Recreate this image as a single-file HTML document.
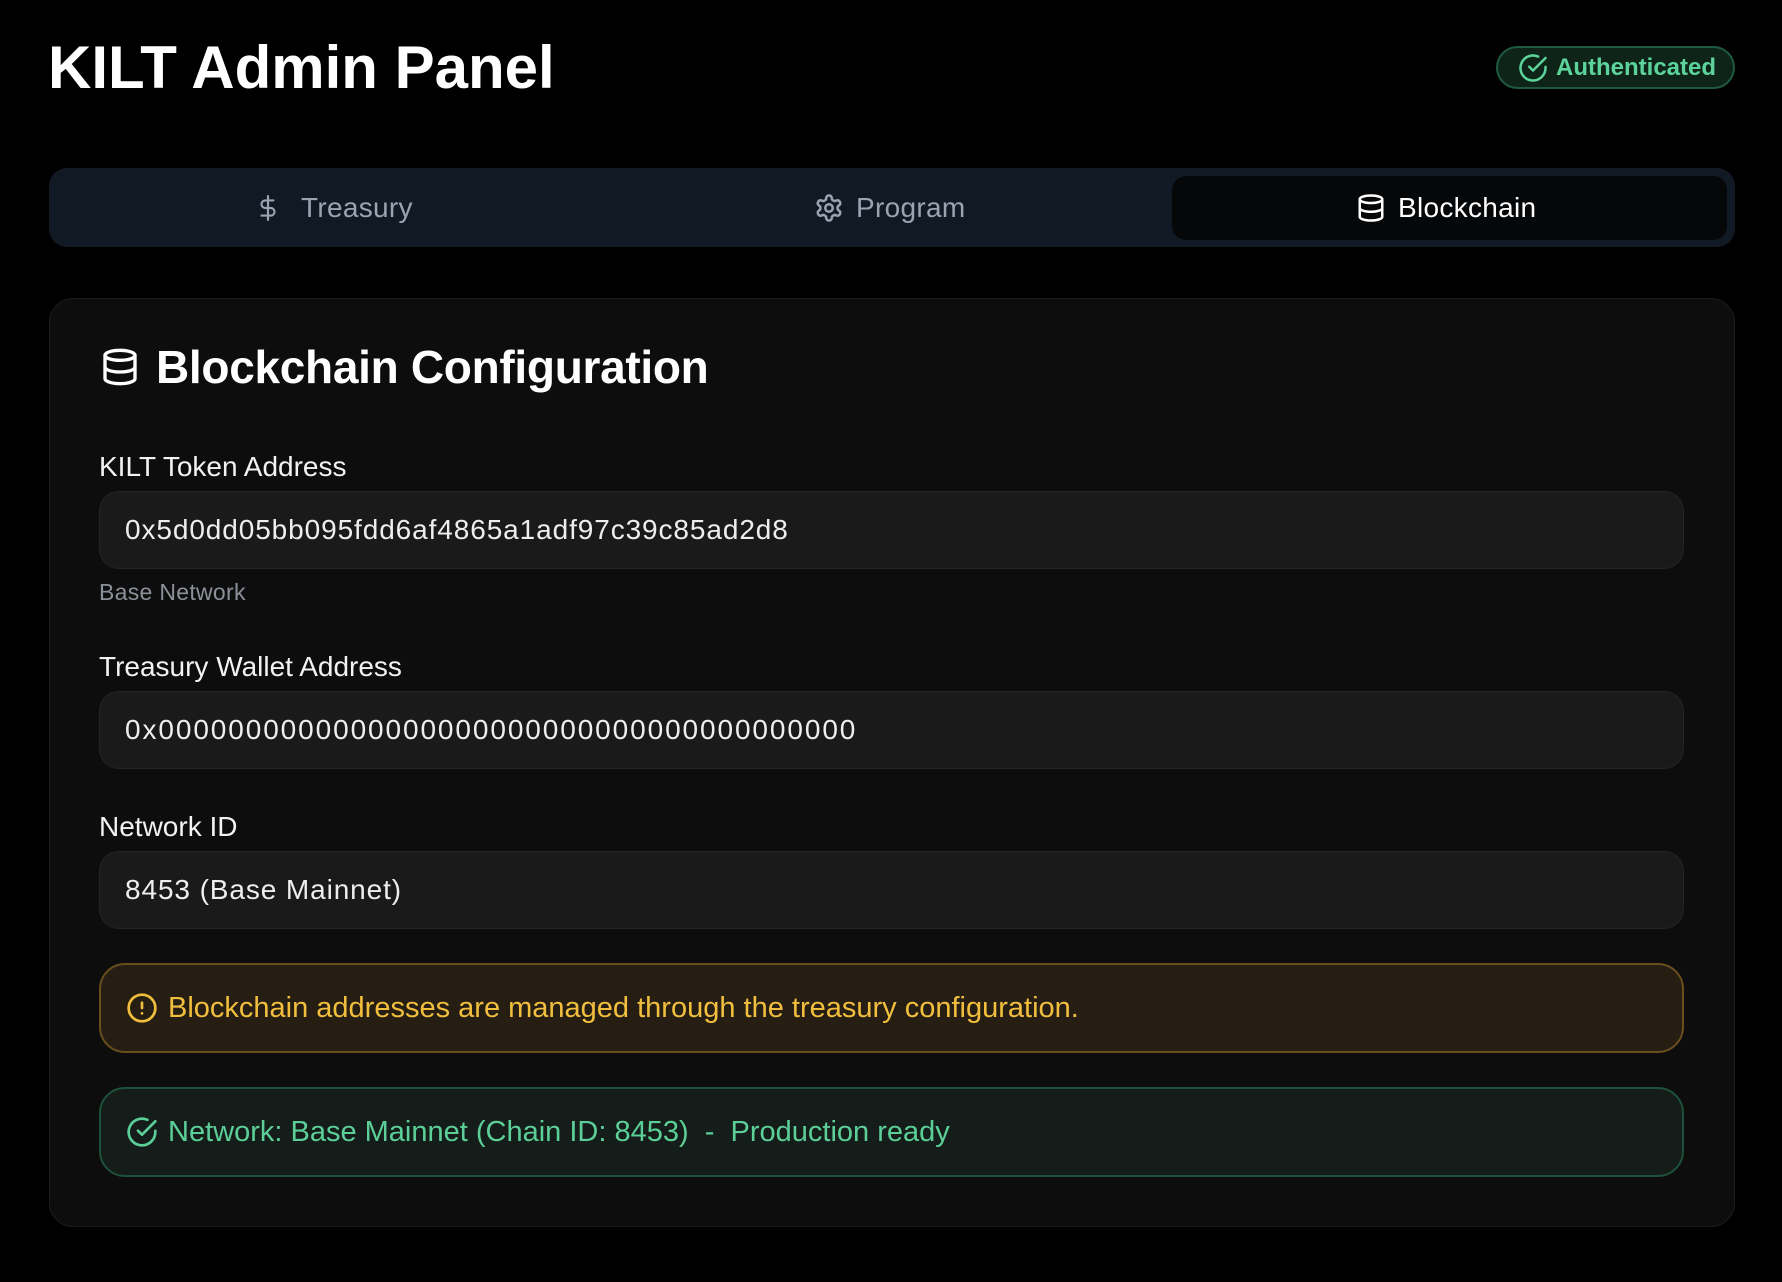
<!DOCTYPE html>
<html><head><meta charset="utf-8"><style>
*{box-sizing:border-box;margin:0;padding:0}
html,body{width:1782px;height:1282px;background:#000;overflow:hidden;font-family:"Liberation Sans",sans-serif;color:#fff}
.abs{position:absolute}
h1{position:absolute;left:48px;top:30px;font-size:60px;font-weight:700;letter-spacing:0px;line-height:76px}
.badge{left:1496px;top:46px;width:239px;height:43px;border:2px solid #1f5a40;background:#0e2419;border-radius:22px;color:#5cd39a;font-size:24px;font-weight:700;display:flex;align-items:center;padding-left:20px;gap:8px}
.tabs{left:49px;top:168px;width:1686px;height:79px;background:#111a24;border-radius:18px}
.active{left:1172px;top:176px;width:555px;height:64px;background:#050709;border-radius:14px}
.tab{top:176px;height:64px;display:flex;align-items:center;gap:12px;font-size:28px;color:#9aa3b0;letter-spacing:0.3px}
.card{left:49px;top:298px;width:1686px;height:929px;background:#0d0d0d;border:1px solid #1c1c1c;border-radius:24px}
.h2{left:100px;top:340px;display:flex;align-items:center;gap:16px;font-size:46px;font-weight:700;letter-spacing:-0.3px}
.lbl{left:99px;font-size:28px;color:#f2f2f2}
.inp{left:99px;width:1585px;height:78px;background:#1a1a1a;border:1px solid #242424;border-radius:20px;font-size:28px;color:#eee;display:flex;align-items:center;padding-left:25px;letter-spacing:0.9px}
.hint{left:99px;top:579px;font-size:23px;color:#8b9099;letter-spacing:0.3px}
.box{left:99px;width:1585px;height:90px;border-radius:26px;display:flex;align-items:center;padding-left:25px;gap:10px;font-size:29px}
</style></head><body>
<h1>KILT Admin Panel</h1>
<div class="abs badge"><svg width="30" height="30" viewBox="0 0 24 24" fill="none" stroke="#5cd39a" stroke-width="2" stroke-linecap="round" stroke-linejoin="round"><path d="M22 11.08V12a10 10 0 1 1-5.93-9.14"/><path d="M22 4 12 14.01l-3-3"/></svg>Authenticated</div>
<div class="abs tabs"></div>
<div class="abs active"></div>
<div class="abs tab" style="left:255px"><svg width="26" height="30" viewBox="0 0 24 24" fill="none" stroke="#9aa3b0" stroke-width="2" stroke-linecap="round"><path d="M12 1v22M17 5H9.5a3.5 3.5 0 0 0 0 7h5a3.5 3.5 0 0 1 0 7H6"/></svg><span style="margin-left:8px">Treasury</span></div>
<div class="abs tab" style="left:814px"><svg width="30" height="30" viewBox="0 0 24 24" fill="none" stroke="#9aa3b0" stroke-width="2" stroke-linecap="round" stroke-linejoin="round"><path d="M12.22 2h-.44a2 2 0 0 0-2 2v.18a2 2 0 0 1-1 1.730l-.43.25a2 2 0 0 1-2 0l-.15-.08a2 2 0 0 0-2.730.73l-.22.38a2 2 0 0 0 .73 2.73l.15.1a2 2 0 0 1 1 1.72v.51a2 2 0 0 1-1 1.74l-.15.09a2 2 0 0 0-.73 2.73l.22.38a2 2 0 0 0 2.73.73l.15-.08a2 2 0 0 1 2 0l.43.25a2 2 0 0 1 1 1.73V20a2 2 0 0 0 2 2h.44a2 2 0 0 0 2-2v-.18a2 2 0 0 1 1-1.73l.43-.25a2 2 0 0 1 2 0l.15.08a2 2 0 0 0 2.73-.73l.22-.39a2 2 0 0 0-.73-2.73l-.15-.08a2 2 0 0 1-1-1.74v-.5a2 2 0 0 1 1-1.74l.15-.09a2 2 0 0 0 .73-2.73l-.22-.38a2 2 0 0 0-2.73-.73l-.15.08a2 2 0 0 1-2 0l-.43-.25a2 2 0 0 1-1-1.73V4a2 2 0 0 0-2-2z"/><circle cx="12" cy="12" r="3"/></svg><span>Program</span></div>
<div class="abs tab" style="left:1356px;color:#fff"><svg width="30" height="32" viewBox="0 0 24 24" fill="none" stroke="#fff" stroke-width="2" stroke-linecap="round"><ellipse cx="12" cy="5" rx="9" ry="3"/><path d="M3 5v14a9 3 0 0 0 18 0V5"/><path d="M3 12a9 3 0 0 0 18 0"/></svg><span>Blockchain</span></div>
<div class="abs card"></div>
<div class="abs h2"><svg width="40" height="42" viewBox="0 0 24 24" fill="none" stroke="#fff" stroke-width="2" stroke-linecap="round"><ellipse cx="12" cy="5" rx="9" ry="3"/><path d="M3 5v14a9 3 0 0 0 18 0V5"/><path d="M3 12a9 3 0 0 0 18 0"/></svg>Blockchain Configuration</div>
<div class="abs lbl" style="top:451px">KILT Token Address</div>
<div class="abs inp" style="top:491px">0x5d0dd05bb095fdd6af4865a1adf97c39c85ad2d8</div>
<div class="abs hint">Base Network</div>
<div class="abs lbl" style="top:651px">Treasury Wallet Address</div>
<div class="abs inp" style="top:691px;letter-spacing:1.9px">0x0000000000000000000000000000000000000000</div>
<div class="abs lbl" style="top:811px">Network ID</div>
<div class="abs inp" style="top:851px">8453 (Base Mainnet)</div>
<div class="abs box" style="top:963px;background:#261e13;border:2px solid #6a4e1d;color:#f1bf3d"><svg width="32" height="32" viewBox="0 0 24 24" fill="none" stroke="#f1bf3d" stroke-width="2" stroke-linecap="round"><circle cx="12" cy="12" r="10"/><path d="M12 8v4M12 16h.01"/></svg>Blockchain addresses are managed through the treasury configuration.</div>
<div class="abs box" style="top:1087px;background:#141d19;border:2px solid #1e5139;color:#5ccf98"><svg width="32" height="32" viewBox="0 0 24 24" fill="none" stroke="#5ccf98" stroke-width="2" stroke-linecap="round" stroke-linejoin="round"><path d="M22 11.08V12a10 10 0 1 1-5.93-9.14"/><path d="M22 4 12 14.01l-3-3"/></svg>Network: Base Mainnet (Chain ID: 8453)&nbsp; - &nbsp;Production ready</div>
</body></html>
